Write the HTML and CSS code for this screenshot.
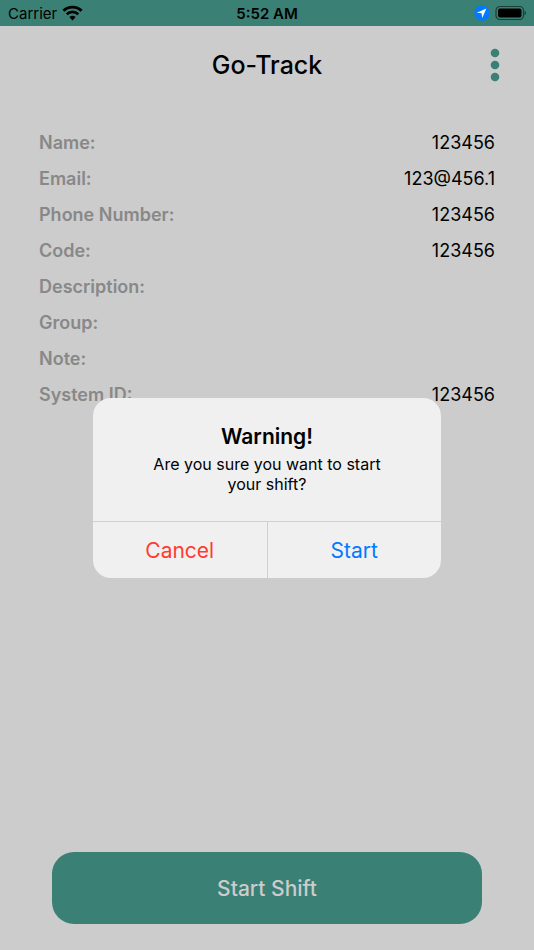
FILE: index.html
```html
<!DOCTYPE html>
<html lang="en">
<head>
    <meta charset="UTF-8">
    <title>Go-Track</title>
    <meta name="viewport" content="width=device-width, initial-scale=1.0">
    <link rel="stylesheet" href="styles.css">
</head>
<body>
    <div class="status-bar">
        <div class="status-left">
            <span>Carrier</span>
            <svg class="wifi" width="21" height="16" viewBox="0 0 20 15">
                <path d="M1.3 5.4a12.4 12.4 0 0 1 17.4 0" fill="none" stroke="#000" stroke-width="2.6"/>
                <path d="M4.5 8.7a7.8 7.8 0 0 1 11 0" fill="none" stroke="#000" stroke-width="2.5"/>
                <path d="M10 14.6l-3-3.2a4.4 4.4 0 0 1 6 0z" fill="#000"/>
            </svg>
        </div>
        <div class="status-time">5:52 AM</div>
        <div class="status-right">
            <svg width="16" height="16" viewBox="0 0 16 16">
                <circle cx="8" cy="8" r="7.7" fill="#007aff"/>
                <path d="M12.4 3.4L2.8 7.7l4.8.6.6 4.8z" fill="#fff"/>
            </svg>
            <svg width="31" height="16" viewBox="0 0 31 16">
                <rect x="1" y="1.5" width="27.5" height="13" rx="4" fill="none" stroke="#1c3d38" stroke-width="1.2"/>
                <rect x="3" y="3.5" width="23.5" height="9" rx="2" fill="#000"/>
                <path d="M29.6 5.7c1.8.8 1.8 3.8 0 4.6z" fill="#1c3d38"/>
            </svg>
        </div>
    </div>

    <div class="screen">
        <header class="header">
            <h1>Go-Track</h1>
            <button class="menu-button" aria-label="Menu">
                <svg width="10" height="34" viewBox="0 0 10 34" fill="#3a8075">
                    <circle cx="5" cy="5" r="4.3"/>
                    <circle cx="5" cy="17" r="4.3"/>
                    <circle cx="5" cy="29" r="4.3"/>
                </svg>
            </button>
        </header>

        <dl class="details">
            <div class="row"><dt>Name:</dt><dd>123456</dd></div>
            <div class="row"><dt>Email:</dt><dd>123@456.1</dd></div>
            <div class="row"><dt>Phone Number:</dt><dd>123456</dd></div>
            <div class="row"><dt>Code:</dt><dd>123456</dd></div>
            <div class="row"><dt>Description:</dt><dd></dd></div>
            <div class="row"><dt>Group:</dt><dd></dd></div>
            <div class="row"><dt>Note:</dt><dd></dd></div>
            <div class="row"><dt>System ID:</dt><dd>123456</dd></div>
        </dl>

        <button class="shift-button">Start Shift</button>

        <div class="overlay">
            <div class="alert" role="alertdialog" aria-labelledby="alertTitle" aria-describedby="alertText">
                <div class="alert-body">
                    <h2 id="alertTitle">Warning!</h2>
                    <p id="alertText">Are you sure you want to start your shift?</p>
                </div>
                <div class="alert-actions">
                    <button class="cancel">Cancel</button>
                    <button class="start">Start</button>
                </div>
            </div>
        </div>
    </div>
</body>
</html>
```
FILE: styles.css
```css
* {
    box-sizing: border-box;
}
body {
    display: flex;
    flex-direction: column;
    min-height: 100vh;
    margin: 0;
    background: #cccccc;
    color: #000;
    font-family: Inter, "Liberation Sans", sans-serif;
}
h1, h2, p, dl, dd {
    margin: 0;
}
button {
    padding: 0;
    border: none;
    background: none;
    font-family: inherit;
    cursor: pointer;
}
svg {
    display: block;
}

/* status bar */
.status-bar {
    display: grid;
    grid-template-columns: 1fr auto 1fr;
    align-items: center;
    height: 26px;
    padding: 0 8px;
    background: #3a8075;
    font-size: 15px;
}
.status-left, .status-right {
    display: flex;
    align-items: center;
    gap: 5px;
}
.status-right {
    justify-content: flex-end;
}
.status-time {
    font-weight: 600;
}

/* main screen */
.screen {
    position: relative;
    flex: 1;
    display: flex;
    flex-direction: column;
}
.header {
    display: grid;
    grid-template-columns: 1fr auto 1fr;
    align-items: center;
    height: 78px;
    padding: 0 34px;
}
.header h1 {
    grid-column: 2;
    font-size: 25px;
    font-weight: 500;
}
.menu-button {
    justify-self: end;
}
.details {
    padding: 20px 39px;
    font-size: 18px;
}
.row {
    display: flex;
    justify-content: space-between;
    align-items: center;
    height: 36px;
}
.row dt {
    color: #888;
    font-weight: 600;
}
.shift-button {
    height: 72px;
    margin: auto 52px 26px;
    border-radius: 22px;
    background: #3a8075;
    color: #ccc;
    font-size: 21px;
    font-weight: 500;
}

/* alert */
.overlay {
    position: absolute;
    inset: 0;
    display: flex;
    align-items: center;
    justify-content: center;
}
.alert {
    width: 66%;
    max-width: 348px;
    border-radius: 18px;
    background: #f0f0f0;
    overflow: hidden;
    text-align: center;
}
.alert-body {
    padding: 22px 48px 27px;
}
.alert h2 {
    font-size: 21px;
    font-weight: 600;
    line-height: 34px;
}
.alert p {
    font-size: 16px;
    line-height: 20px;
}
.alert-actions {
    display: flex;
    border-top: 1px solid #cfd1d0;
}
.alert-actions button {
    flex: 1;
    height: 56px;
    font-size: 21px;
}
.cancel {
    color: #ff3b30;
}
.alert-actions .start {
    border-left: 1px solid #cfd1d0;
    color: #007aff;
}
```
